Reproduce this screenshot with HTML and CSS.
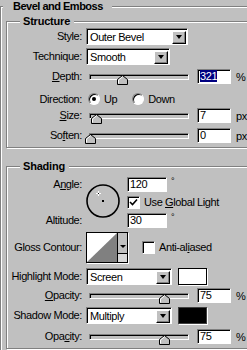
FILE: index.html
```html
<!DOCTYPE html>
<html lang="en">
<head>
<meta charset="UTF-8">
<title>Layer Style - Bevel and Emboss</title>
<link rel="stylesheet" href="styles.css">
</head>
<body>
<fieldset class="group outer">
  <legend>Bevel and Emboss</legend>

  <fieldset class="group inner">
    <legend>Structure</legend>
    <div class="row sel-row">
      <span class="label">Style:</span>
      <div class="select w-style"><span>Outer Bevel</span><i class="drop"></i></div>
    </div>
    <div class="row sel-row r-technique">
      <span class="label">Technique:</span>
      <div class="select w-technique"><span>Smooth</span><i class="drop"></i></div>
    </div>
    <div class="row num-row r-depth">
      <span class="label"><u>D</u>epth:</span>
      <div class="slider">
        <div class="track"></div>
        <svg class="thumb" style="left: 28px" width="11" height="10" viewBox="0 0 11 10"><path d="M0.5 9.5V4.5L5.5 0.5L10.5 4.5V9.5Z" fill="#c0c0c0" stroke="#000"/><path d="M1.5 8.5V5L5.5 1.8" fill="none" stroke="#fff"/></svg>
      </div>
      <div class="num"><span class="hl">321</span></div>
      <span class="unit">%</span>
    </div>
    <div class="row r-direction">
      <span class="label">Direction:</span>
      <span class="radio on"></span><span class="opt">Up</span>
      <span class="radio down"></span><span class="opt">Down</span>
    </div>
    <div class="row num-row r-size">
      <span class="label"><u>S</u>ize:</span>
      <div class="slider">
        <div class="track"></div>
        <svg class="thumb" style="left: 2px" width="11" height="10" viewBox="0 0 11 10"><path d="M0.5 9.5V4.5L5.5 0.5L10.5 4.5V9.5Z" fill="#c0c0c0" stroke="#000"/><path d="M1.5 8.5V5L5.5 1.8" fill="none" stroke="#fff"/></svg>
      </div>
      <div class="num">7</div>
      <span class="unit">px</span>
    </div>
    <div class="row num-row r-soften">
      <span class="label">So<u>f</u>ten:</span>
      <div class="slider">
        <div class="track"></div>
        <svg class="thumb" style="left: -4px" width="11" height="10" viewBox="0 0 11 10"><path d="M0.5 9.5V4.5L5.5 0.5L10.5 4.5V9.5Z" fill="#c0c0c0" stroke="#000"/><path d="M1.5 8.5V5L5.5 1.8" fill="none" stroke="#fff"/></svg>
      </div>
      <div class="num">0</div>
      <span class="unit">px</span>
    </div>
  </fieldset>

  <fieldset class="group inner shading">
    <legend>Shading</legend>
    <div class="angle">
      <span class="label a-angle">A<u>n</u>gle:</span>
      <svg class="dial" width="34" height="34" viewBox="0 0 34 34">
        <circle cx="17" cy="17" r="16" fill="none" stroke="#000" stroke-width="1.6"/>
        <rect x="16" y="16" width="2" height="2" fill="#000"/>
        <path d="M10 9.5H15M12.5 7V12" stroke="#fff" stroke-width="1"/>
        <rect x="12" y="9" width="1" height="1" fill="#000"/>
      </svg>
      <div class="cell a-angle-in"><div class="num w-deg">120</div><span class="deg">°</span></div>
      <div class="cell a-global"><span class="check"><svg width="9" height="9" viewBox="0 0 9 9"><path d="M1 4L3.5 6.5L8 1.5" fill="none" stroke="#000" stroke-width="1.6"/></svg></span><span class="opt">Use <u>G</u>lobal Light</span></div>
      <span class="label a-alt">Altitude:</span>
      <div class="cell a-alt-in"><div class="num w-deg">30</div><span class="deg">°</span></div>
    </div>
    <div class="row r-gloss">
      <span class="label">Gloss Contour:</span>
      <div class="contour">
        <svg width="30" height="29" viewBox="0 0 30 29"><rect width="30" height="29" fill="#fff"/><path d="M0 29L30 0V29Z" fill="#808080"/></svg>
        <div class="cdrop"><i class="arrow"></i><i class="cbox"></i></div>
      </div>
      <span class="check"></span><span class="opt">Anti-al<u>i</u>ased</span>
    </div>
    <div class="row sel-row r-hmode">
      <span class="label">Highlight Mode:</span>
      <div class="select w-mode"><span>Screen</span><i class="drop"></i></div>
      <span class="swatch white"></span>
    </div>
    <div class="row num-row r-op1">
      <span class="label"><u>O</u>pacity:</span>
      <div class="slider">
        <div class="track"></div>
        <svg class="thumb" style="left: 70px" width="11" height="10" viewBox="0 0 11 10"><path d="M0.5 9.5V4.5L5.5 0.5L10.5 4.5V9.5Z" fill="#c0c0c0" stroke="#000"/><path d="M1.5 8.5V5L5.5 1.8" fill="none" stroke="#fff"/></svg>
      </div>
      <div class="num">75</div>
      <span class="unit">%</span>
    </div>
    <div class="row sel-row r-smode">
      <span class="label">Shadow Mode:</span>
      <div class="select w-mode"><span>Multiply</span><i class="drop"></i></div>
      <span class="swatch black"></span>
    </div>
    <div class="row num-row r-op2">
      <span class="label">Opa<u>c</u>ity:</span>
      <div class="slider">
        <div class="track"></div>
        <svg class="thumb" style="left: 70px" width="11" height="10" viewBox="0 0 11 10"><path d="M0.5 9.5V4.5L5.5 0.5L10.5 4.5V9.5Z" fill="#c0c0c0" stroke="#000"/><path d="M1.5 8.5V5L5.5 1.8" fill="none" stroke="#fff"/></svg>
      </div>
      <div class="num">75</div>
      <span class="unit">%</span>
    </div>
  </fieldset>
</fieldset>
</body>
</html>
```

FILE: styles.css
```css
html, body {
  overflow: hidden;
}
body {
  margin: 0;
  width: 247px;
  height: 350px;
  background: #c0c0c0;
  color: #000;
  font-family: 'Liberation Sans', Arial, sans-serif;
  font-size: 11px;
  letter-spacing: -0.4px;
}
u {
  text-decoration: underline;
  text-underline-offset: 1px;
}

/* group boxes */
.group {
  margin: 0;
  padding: 0;
  min-width: 0;
  border: 1px solid #808080;
  box-shadow: inset 1px 1px #fff, 1px 1px #fff;
}
.group legend {
  margin-left: 13px;
  padding: 0 4px 0 3px;
  line-height: 13px;
  font-weight: bold;
  letter-spacing: -0.2px;
  background: #c0c0c0;
}
.outer {
  width: 320px;
  height: 400px;
  padding: 2px 0 0 2px;
}
.outer > legend {
  margin-left: 0;
  padding: 0 9px 0 10px;
  letter-spacing: -0.5px;
}
.inner {
  margin-left: 3px;
  padding-bottom: 4px;
}
.shading {
  margin-top: 12px;
}

/* rows */
.row {
  display: flex;
  align-items: center;
}
.label {
  flex: none;
  width: 75px;
  text-align: right;
  line-height: 13px;
}
.sel-row { height: 17px; }
.num-row { height: 15px; }
.r-technique { margin-top: 3px; }
.r-depth { margin-top: 4px; }
.r-direction { margin-top: 8px; height: 14px; }
.r-size { margin-top: 2px; }
.r-soften { margin-top: 5px; }
.r-gloss { margin-top: 4px; height: 31px; }
.r-hmode { margin-top: 5px; }
.r-op1 { margin-top: 3px; }
.r-smode { margin-top: 4px; }
.r-op2 { margin-top: 5px; }

/* sunken fields */
.select, .num, .check, .radio {
  box-sizing: border-box;
  background: #fff;
  border: 1px solid;
  border-color: #808080 #fff #fff #808080;
  box-shadow: inset 1px 1px #000;
}
.select {
  display: flex;
  align-items: center;
  height: 17px;
  margin-left: 4px;
  padding-left: 3px;
}
.w-style { width: 102px; }
.w-technique { width: 84px; }
.w-mode { width: 86px; }
.drop {
  display: flex;
  align-items: center;
  justify-content: center;
  box-sizing: border-box;
  width: 14px;
  height: 13px;
  margin: 1px 1px 0 auto;
  background: #c0c0c0;
  border: 1px solid;
  border-color: #fff #000 #000 #fff;
  box-shadow: inset -1px -1px #808080;
}
.drop::after {
  content: '';
  border-top: 4px solid #000;
  border-left: 3px solid transparent;
  border-right: 3px solid transparent;
}
.num {
  width: 34px;
  height: 15px;
  margin-left: 8px;
  padding-left: 2px;
  line-height: 13px;
}
.hl {
  background: #000080;
  color: #fff;
}
.unit {
  margin-left: 5px;
}

/* sliders */
.slider {
  position: relative;
  flex: none;
  width: 100px;
  height: 15px;
  margin-left: 7px;
}
.track {
  box-sizing: border-box;
  height: 6px;
  margin-top: 5px;
  background: #c0c0c0;
  border: 1px solid;
  border-color: #808080 #fff #fff #808080;
  box-shadow: inset 1px 1px #000;
}
.thumb {
  position: absolute;
  top: 6px;
}

/* radios and checks */
.radio {
  display: flex;
  align-items: center;
  justify-content: center;
  width: 12px;
  height: 12px;
  margin-left: 6px;
  border-radius: 50%;
}
.radio.on::after {
  content: '';
  width: 4px;
  height: 4px;
  border-radius: 50%;
  background: #000;
}
.radio.down {
  margin-left: 15px;
}
.opt {
  margin-left: 4px;
  line-height: 13px;
}
.check {
  display: flex;
  align-items: center;
  justify-content: center;
  flex: none;
  width: 13px;
  height: 13px;
  margin-left: 14px;
}

/* angle block */
.angle {
  display: grid;
  grid-template-columns: 75px 45px auto;
  grid-template-rows: 15px 21px 15px;
  margin-top: 4px;
}
.a-angle { grid-area: 1 / 1; align-self: center; }
.a-alt { grid-area: 3 / 1; align-self: center; }
.dial {
  grid-area: 1 / 2 / 4 / 3;
  margin: 7px 0 0 4px;
}
.cell {
  display: flex;
  align-items: center;
}
.a-angle-in { grid-area: 1 / 3; }
.a-global { grid-area: 2 / 3; }
.a-alt-in { grid-area: 3 / 3; }
.cell .num { margin-left: 0; }
.w-deg { width: 40px; }
.a-global .check { margin-left: 0; }
.deg {
  align-self: flex-start;
  margin-left: 4px;
  font-size: 9px;
  line-height: 9px;
}

/* gloss contour */
.contour {
  display: flex;
  box-sizing: border-box;
  width: 42px;
  height: 31px;
  margin-left: 4px;
  border: 1px solid #000;
  box-shadow: 1px 1px #fff;
}
.cdrop {
  display: flex;
  flex-direction: column;
  align-items: center;
  flex: 1;
  border-left: 1px solid #000;
  background: #c0c0c0;
}
.arrow {
  margin-top: 12px;
  border-top: 3px solid #000;
  border-left: 3px solid transparent;
  border-right: 3px solid transparent;
}
.cbox {
  box-sizing: border-box;
  width: 100%;
  height: 9px;
  margin-top: auto;
  border-top: 1px solid #000;
  background: #d8d8d8;
}

/* colour swatches */
.swatch {
  box-sizing: border-box;
  width: 29px;
  height: 17px;
  margin-left: 6px;
  border: 1px solid #000;
  box-shadow: 1px 1px #fff;
}
.swatch.white { background: #fff; }
.swatch.black { background: #000; border-color: #404040; }
```
